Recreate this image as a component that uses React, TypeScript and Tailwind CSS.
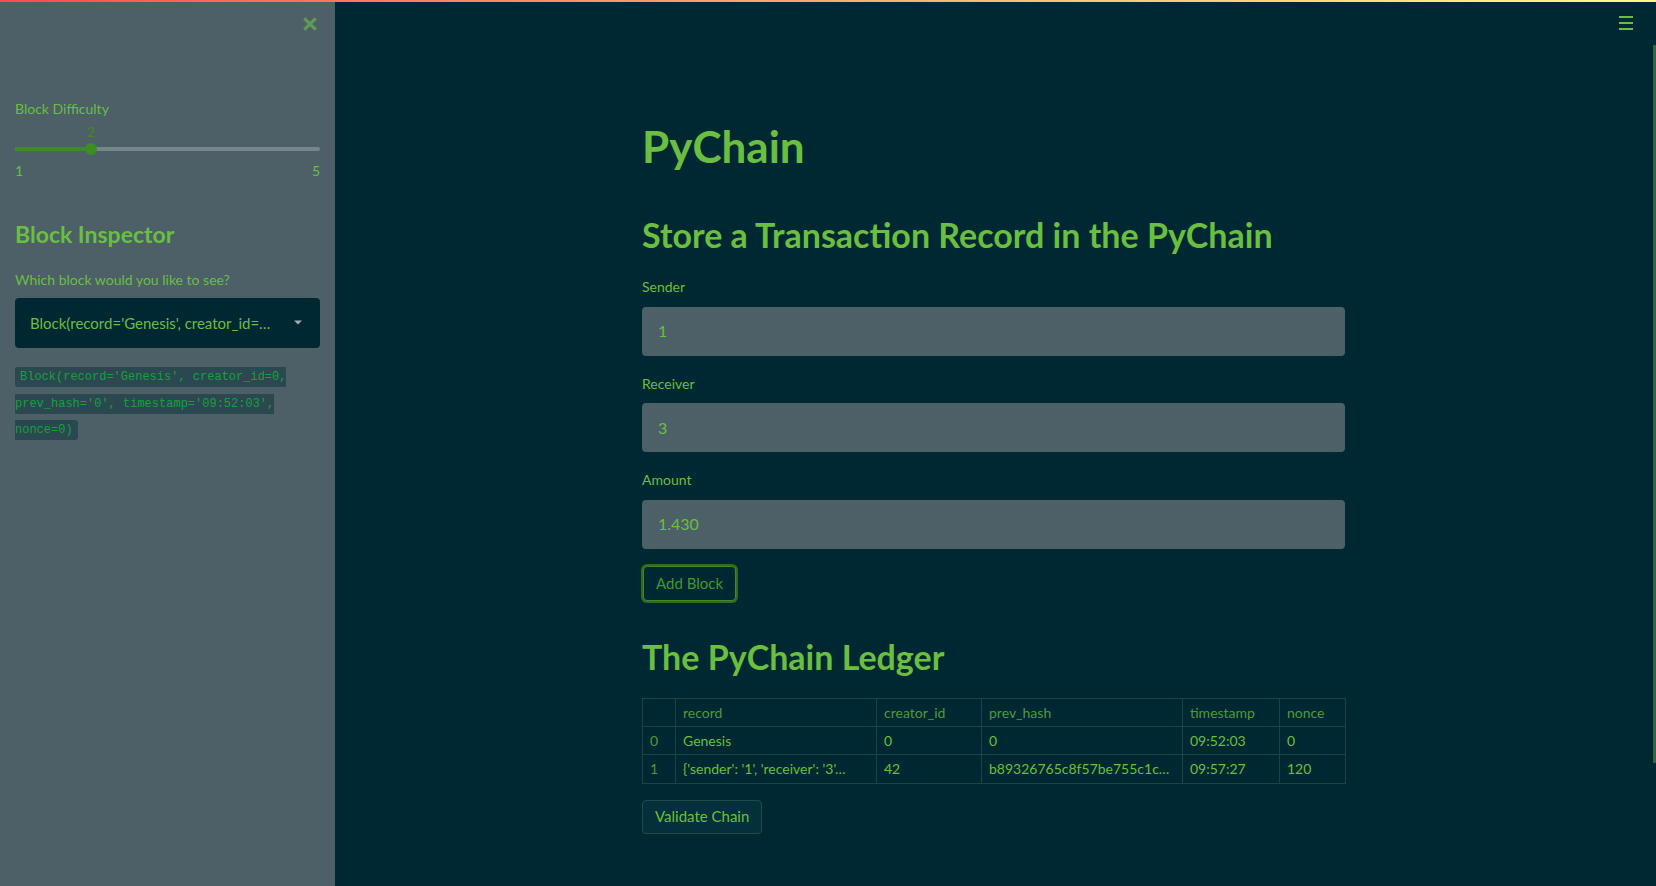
import React from "react";

const rows = [
  { i: "0", record: "Genesis", creator: "0", prev: "0", ts: "09:52:03", nonce: "0" },
  {
    i: "1",
    record: "{'sender': '1', 'receiver': '3'…",
    creator: "42",
    prev: "b89326765c8f57be755c1c…",
    ts: "09:57:27",
    nonce: "120",
  },
];

function Sidebar() {
  return (
    <aside className="w-[335px] shrink-0 h-[886px] bg-[#4d6067] px-[15px] relative">
      <button className="absolute right-[17px] top-[16px] text-[#5f9a57]">
        <svg width="16" height="16" viewBox="0 0 14 14">
          <path d="M2 2 L12 12 M12 2 L2 12" stroke="currentColor" strokeWidth="2.8" strokeLinecap="butt" />
        </svg>
      </button>

      <p className="pt-[99px] text-[14px] leading-[20px] text-[#6abf40]">Block Difficulty</p>

      <div className="mt-[3px] relative h-[60px]">
        <span className="absolute left-[57px] top-0 w-[38px] text-center text-[14px] leading-[20px] text-[#3d8c26]">
          2
        </span>
        <div className="absolute left-0 right-0 top-[25px] h-[4px] rounded-full bg-[#76878c]">
          <div className="h-full w-[76px] rounded-full bg-[#3d8c26]" />
        </div>
        <div className="absolute left-[70px] top-[21px] w-[12px] h-[12px] rounded-full bg-[#3d8c26]" />
        <div className="absolute left-0 right-0 top-[39px] flex justify-between text-[14px] leading-[20px] text-[#6abf40]">
          <span>1</span>
          <span>5</span>
        </div>
      </div>

      <h2 className="mt-[38px] text-[23px] leading-[29px] font-bold text-[#6abf40]">Block Inspector</h2>

      <p className="mt-[21px] text-[14px] leading-[20px] text-[#6abf40]">Which block would you like to see?</p>

      <div className="mt-[8px] h-[50px] rounded-[4px] bg-[#002833] flex items-center justify-between pl-[15px] pr-[17px]">
        <span className="text-[15px] text-[#6abf40] truncate">Block(record='Genesis', creator_id=…</span>
        <svg width="10" height="6" viewBox="0 0 10 6" className="shrink-0 ml-2">
          <path d="M1 0.5 L5 4.5 L9 0.5 Z" fill="#9fb0b4" />
        </svg>
      </div>

      <p className="mt-[16px] w-[300px] text-[12px] leading-[25.5px] font-['DejaVu_Sans_Mono',monospace]">
        <code className="bg-[#2b4850] text-[#15a03f] px-[5px] py-[3px] rounded-[3px] [box-decoration-break:slice]">
          Block(record='Genesis', creator_id=0, prev_hash='0', timestamp='09:52:03', nonce=0)
        </code>
      </p>
    </aside>
  );
}

function Field({ label, value, gap }: { label: string; value: string; gap: string }) {
  return (
    <div className={gap}>
      <label className="block text-[14px] leading-[20px] text-[#6abf40]">{label}</label>
      <div className="mt-[9.5px] h-[49px] rounded-[4px] bg-[#4d6067] flex items-center px-[16px] text-[16px] text-[#6abf40]">
        {value}
      </div>
    </div>
  );
}

function Ledger() {
  const head = ["", "record", "creator_id", "prev_hash", "timestamp", "nonce"];
  const widths = ["w-[33px]", "w-[201px]", "w-[105px]", "w-[201px]", "w-[97px]", "w-[66px]"];
  return (
    <table className="mt-[21px] w-[703px] table-fixed border-collapse text-[14px] text-[#6abf40]">
      <thead>
        <tr className="h-[28px]">
          {head.map((h, k) => (
            <th
              key={k}
              className={`${widths[k]} border border-[#1b4446] px-[7px] text-left font-normal text-[#4f9a3a]`}
            >
              {h}
            </th>
          ))}
        </tr>
      </thead>
      <tbody>
        {rows.map((r) => (
          <tr key={r.i} className="h-[28.5px]">
            <td className="border border-[#1b4446] px-[7px] text-[#4f9a3a]">{r.i}</td>
            <td className="border border-[#1b4446] px-[7px] truncate">{r.record}</td>
            <td className="border border-[#1b4446] px-[7px]">{r.creator}</td>
            <td className="border border-[#1b4446] px-[7px] truncate">{r.prev}</td>
            <td className="border border-[#1b4446] px-[7px]">{r.ts}</td>
            <td className="border border-[#1b4446] px-[7px]">{r.nonce}</td>
          </tr>
        ))}
      </tbody>
    </table>
  );
}

export default function App() {
  return (
    <div className="relative flex h-[886px] w-full overflow-hidden bg-[#002833] font-['Lato',sans-serif]">
      <div className="absolute left-0 right-0 top-0 h-[2px] bg-gradient-to-r from-[#ff4b4b] to-[#fffd80] z-10" />

      <Sidebar />

      <main className="relative flex-1 flex justify-center pr-[4px]">
        <button className="absolute right-[23px] top-[16px] flex flex-col gap-[4px]">
          <span className="block w-[14px] h-[2px] bg-[#6abf40]" />
          <span className="block w-[14px] h-[2px] bg-[#6abf40]" />
          <span className="block w-[14px] h-[2px] bg-[#6abf40]" />
        </button>
        <div className="absolute right-0 top-[45px] w-[3px] h-[718px] bg-[#2e6a3a]" />

        <div className="w-[703px] pt-[120px]">
          <h1 className="text-[44px] leading-[53px] font-bold text-[#6abf40]">PyChain</h1>
          <h2 className="mt-[41px] text-[34px] leading-[41px] font-bold text-[#6abf40]">
            Store a Transaction Record in the PyChain
          </h2>

          <Field label="Sender" value="1" gap="mt-[22px]" />
          <Field label="Receiver" value="3" gap="mt-[18px]" />
          <Field label="Amount" value="1.430" gap="mt-[18px]" />

          <button className="mt-[17px] ml-[1px] h-[35px] px-[12px] rounded-[4px] border border-[#3d8c26] bg-[#002833] text-[15px] text-[#3f9a2a] ring-2 ring-[#2f6a2a]">
            Add Block
          </button>

          <h2 className="mt-[35px] text-[34px] leading-[41px] font-bold text-[#6abf40]">The PyChain Ledger</h2>

          <Ledger />

          <button className="mt-[16px] h-[34px] px-[12px] rounded-[4px] border border-[#1e4a4c] bg-[#04303b] text-[15px] text-[#6abf40]">
            Validate Chain
          </button>
        </div>
      </main>
    </div>
  );
}
